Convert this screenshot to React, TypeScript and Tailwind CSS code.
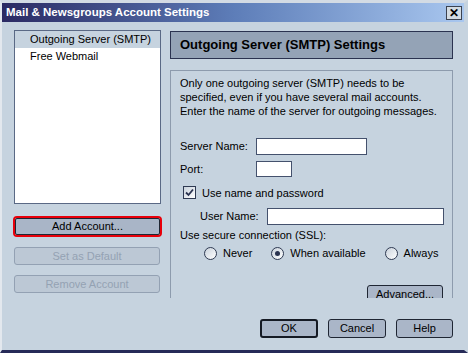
const font = { fontFamily: '"Liberation Sans", Arial, sans-serif' }

const Radio = ({ checked }: { checked?: boolean }) => (
    <span className="w-[13px] h-[13px] rounded-full border border-[#2f3a52] bg-gradient-to-br from-[#c9d2dc] to-white flex items-center justify-center shrink-0">
        {checked && <span className="w-[5px] h-[5px] rounded-full bg-[#2a3350]" />}
    </span>
)

const Button = ({ label, className = "" }: { label: string; className?: string }) => (
    <button className={`h-[19px] bg-[#aab6c8] border border-[#1f2633] rounded-[3px] text-[11px] text-black flex items-center justify-center ${className}`}>
        {label}
    </button>
)

const Disabled = ({ label }: { label: string }) => (
    <button className="w-[146px] h-[18px] bg-[#bcc8d5] border border-[#93a1b3] rounded-[3px] text-[11px] text-[#94a2b3] flex items-center justify-center">
        {label}
    </button>
)

export default function App() {
    return (
        <div style={font} className="w-[468px] h-[353px] bg-[#c6d3df] flex flex-col border-l-2 border-l-[#e3e8ee] border-r-4 border-r-[#c6d3df] border-t-[3px] border-t-[#d3dbe4] border-b-[3px] border-b-[#262a58] overflow-hidden">
            {/* title bar */}
            <div className="h-[19px] flex items-center justify-between bg-gradient-to-r from-[#2b2a63] via-[#5d7db8] to-[#a9c7ef] pl-[4px] pr-[2px]">
                <span className="text-white font-bold text-[11.5px]">Mail &amp; Newsgroups Account Settings</span>
                <span className="w-[16px] h-[14px] bg-[#d3dbe3] border border-[#3b4250] flex items-center justify-center text-[12px] font-bold leading-none text-black">✕</span>
            </div>

            <div className="flex flex-1">
                {/* accounts column */}
                <div className="pl-[12px] pt-[8px] flex flex-col w-[168px]">
                    <div className="w-[147px] h-[174px] bg-white border border-[#5a6985] text-[11px]">
                        <div className="h-[17px] bg-[#c6d3df] pl-[15px] flex items-center">Outgoing Server (SMTP)</div>
                        <div className="h-[17px] pl-[15px] flex items-center">Free Webmail</div>
                    </div>
                    <div className="mt-[12px] -ml-[1px] w-[149px] h-[21px] border-2 border-[#e8000a] rounded-[4px]">
                        <button className="w-full h-full bg-[#a9b5c7] border border-[#1f2633] rounded-[2px] text-[11px] text-black flex items-center justify-center">
                            Add Account...
                        </button>
                    </div>
                    <div className="mt-[10px]"><Disabled label="Set as Default" /></div>
                    <div className="mt-[10px]"><Disabled label="Remove Account" /></div>
                </div>

                {/* settings column */}
                <div className="pt-[9px] flex flex-col">
                    <div className="w-[283px] h-[28px] bg-[#94a3b6] border border-[#2b3350] pl-[9px] flex items-center">
                        <span className="font-bold text-[13px] text-black">Outgoing Server (SMTP) Settings</span>
                    </div>
                    <div className="mt-[11px] w-[283px] h-[228px] border-t border-l border-r border-[#8d9bad] pl-[9px] pt-[5px] text-[11px] text-black overflow-hidden">
                        <p className="leading-[14px]">
                            Only one outgoing server (SMTP) needs to be<br />
                            specified, even if you have several mail accounts.<br />
                            Enter the name of the server for outgoing messages.
                        </p>
                        <div className="mt-[20px] flex items-center">
                            <span className="w-[76px]">Server Name:</span>
                            <span className="w-[111px] h-[17px] bg-white border border-[#44516d]" />
                        </div>
                        <div className="mt-[6px] flex items-center">
                            <span className="w-[76px]">Port:</span>
                            <span className="w-[36px] h-[16px] bg-white border border-[#44516d]" />
                        </div>
                        <div className="mt-[7px] flex items-center">
                            <span className="ml-[3px] w-[13px] h-[13px] bg-gradient-to-br from-[#c9d2dc] to-white border border-[#2f3a52] flex items-center justify-center">
                                <svg width="9" height="9" viewBox="0 0 9 9">
                                    <path d="M1 4.5 L3.5 7 L8 1.5" stroke="#2a3350" strokeWidth="1.8" fill="none" />
                                </svg>
                            </span>
                            <span className="ml-[6px]">Use name and password</span>
                        </div>
                        <div className="mt-[7px] flex items-center">
                            <span className="ml-[20px] w-[67px]">User Name:</span>
                            <span className="w-[177px] h-[17px] bg-white border border-[#44516d]" />
                        </div>
                        <div className="mt-[3px] leading-[14px]">Use secure connection (SSL):</div>
                        <div className="mt-[3px] flex items-center h-[16px]">
                            <span className="ml-[24px]"><Radio /></span>
                            <span className="ml-[6px]">Never</span>
                            <span className="ml-[19px]"><Radio checked /></span>
                            <span className="ml-[6px]">When available</span>
                            <span className="ml-[19px]"><Radio /></span>
                            <span className="ml-[6px]">Always</span>
                        </div>
                        <div className="mt-[24px] flex justify-end pr-[9px]">
                            <Button label="Advanced..." className="w-[76px] h-[19px] shrink-0" />
                        </div>
                    </div>
                </div>
            </div>

            {/* dialog buttons */}
            <div className="flex justify-end gap-[10px] pr-[11px] pb-[12px]">
                <button className="w-[58px] h-[19px] bg-[#aab6c8] border-2 border-[#151a24] rounded-[3px] text-[11px] text-black flex items-center justify-center">OK</button>
                <Button label="Cancel" className="w-[58px]" />
                <Button label="Help" className="w-[57px]" />
            </div>
        </div>
    )
}
